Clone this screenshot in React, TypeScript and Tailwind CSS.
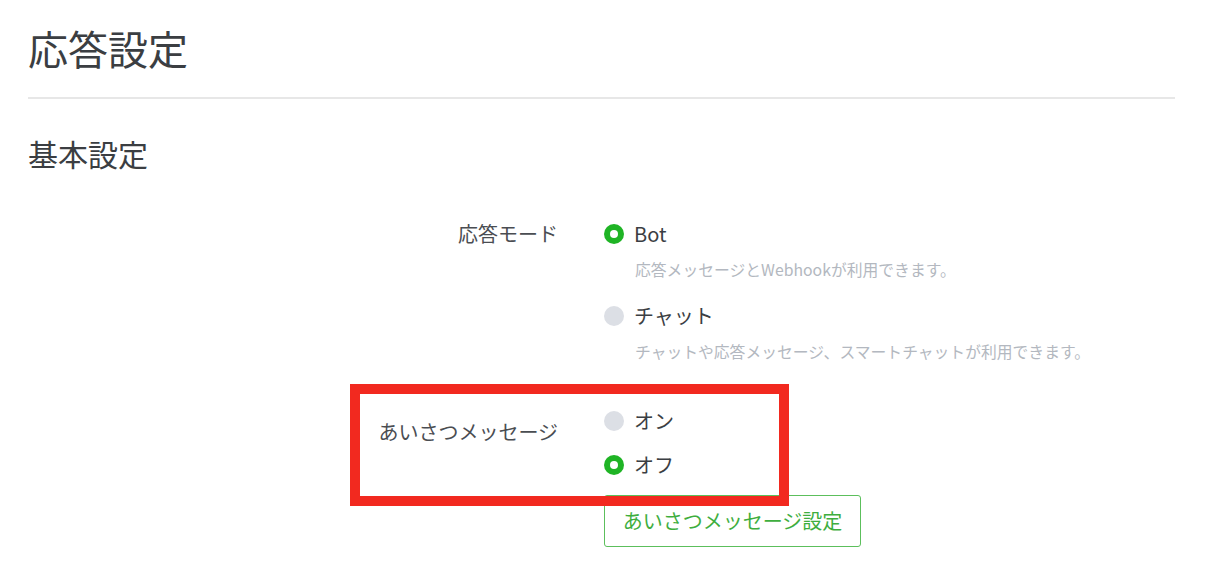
import React from "react";

const font = { fontFamily: '"Noto Sans CJK JP", "Noto Sans", sans-serif' };

function Radio({ checked }: { checked: boolean }) {
  return checked ? (
    <span className="flex h-[20px] w-[20px] shrink-0 items-center justify-center rounded-full bg-[#1fb425]">
      <span className="h-[8px] w-[8px] rounded-full bg-white" />
    </span>
  ) : (
    <span className="h-[20px] w-[20px] shrink-0 rounded-full bg-[#dcdfe5]" />
  );
}

function Option({ checked, label, desc }: { checked: boolean; label: string; desc?: string }) {
  return (
    <div className="flex flex-col">
      <div className="flex h-[28px] items-center gap-[10px]">
        <Radio checked={checked} />
        <span className="text-[20px] leading-[28px] text-[#3b3e43]">{label}</span>
      </div>
      {desc && (
        <div className="mt-[11px] pl-[31px] text-[15.8px] leading-[22px] text-[#b3b8c0]">{desc}</div>
      )}
    </div>
  );
}

export default function App() {
  return (
    <div className="relative min-h-[580px] w-[1206px] bg-white" style={font}>
      <div className="pl-[28px] pr-[31px] pt-[24px]">
        <h1 className="text-[40px] leading-[48px] text-[#3b3e42]">応答設定</h1>
        <div className="mt-[25px] h-[2px] bg-[#e7e7e7]" />
        <h2 className="mt-[34px] text-[30px] leading-[40px] text-[#3b3e42]">基本設定</h2>

        <div className="mt-[47px] grid grid-cols-[530px_1fr] gap-x-[46px]">
          <div className="text-right text-[20px] leading-[28px] text-[#4a4d52]">応答モード</div>
          <div className="flex flex-col gap-[21px]">
            <Option checked label="Bot" desc="応答メッセージとWebhookが利用できます。" />
            <Option checked={false} label="チャット" desc="チャットや応答メッセージ、スマートチャットが利用できます。" />
          </div>

          <div className="mt-[44px] pt-[11px] text-right text-[20px] leading-[28px] text-[#4a4d52]">
            あいさつメッセージ
          </div>
          <div className="mt-[44px] flex flex-col items-start gap-[16px]">
            <Option checked={false} label="オン" />
            <Option checked label="オフ" />
            <button className="flex h-[52px] w-[257px] items-center justify-center rounded-[3px] border border-[#5cbf5c] bg-white text-[20px] text-[#3eae3e]">
              あいさつメッセージ設定
            </button>
          </div>
        </div>
      </div>

      <div className="pointer-events-none absolute left-[350px] top-[384px] h-[122px] w-[439px] border-[10px] border-[#f2291f]" />
    </div>
  );
}
